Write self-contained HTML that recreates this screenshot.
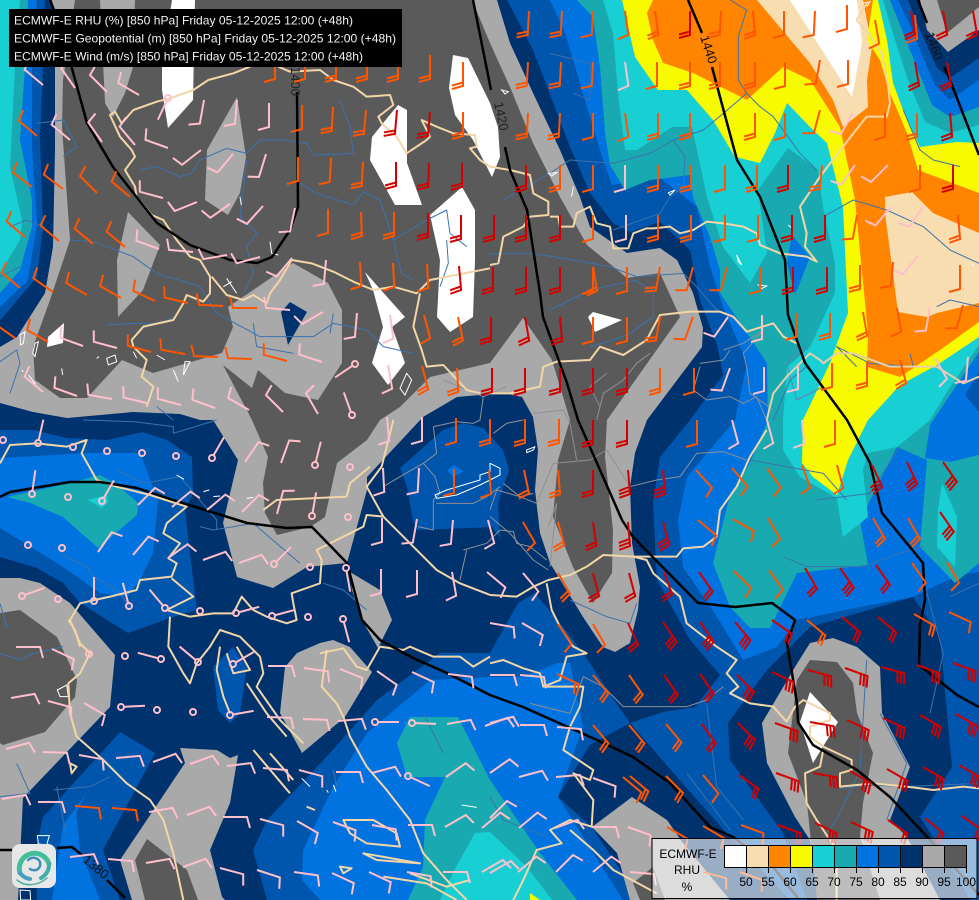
<!DOCTYPE html>
<html><head><meta charset="utf-8"><title>ECMWF-E</title>
<style>html,body{margin:0;padding:0;background:#00326e;width:979px;height:900px;overflow:hidden}svg{display:block}text{font-family:"Liberation Sans",sans-serif}</style></head>
<body>
<svg xmlns="http://www.w3.org/2000/svg" width="979" height="900" viewBox="0 0 979 900">
<defs>
<path id="a" fill="none" d="M0 0V24L-11 27"/>
<path id="b" fill="none" d="M0 0V24L-11 27M0 20.500L-11 23.500"/>
<path id="d" fill="none" d="M0 0V24L-11 27M0 20.500L-11 23.500M0 17L-11 20"/>
<g id="c" fill="none"><circle r="3"/><path d="M0 3V24"/></g>
<circle id="o" r="3" fill="none"/>
</defs>
<rect width="979" height="900" fill="#00326e"/>

<!-- west bands -->
<polygon fill="#0055ad" points="0,0 45,0 43,67 40,137 43,227 37,277 3,317 0,320"/>
<polygon fill="#0073e0" points="0,0 37,0 32,67 32,147 37,223 28,280 0,307"/>
<polygon fill="#18aab0" points="0,0 28,0 25,67 20,140 32,200 32,227 20,270 0,293"/>
<polygon fill="#18d0d4" points="0,0 20,0 15,67 10,167 22,220 20,240 0,273"/>

<!-- SW blues -->
<polygon fill="#0055ad" points="0,430 33,430 67,438 107,440 143,432 167,440 192,457 193,493 185,510 190,553 197,610 173,617 128,633 80,603 63,583 37,568 0,557"/>
<polygon fill="#0073e0" points="0,458 87,453 140,453 158,500 153,553 140,580 127,597 100,593 60,565 0,528"/>
<polygon fill="#18aab0" points="7,497 70,483 100,475 115,483 138,503 137,515 98,548 63,517 30,503"/>
<polygon fill="#18d0d4" points="88,500 107,495 108,502 102,508"/>
<polygon fill="#0055ad" points="120,732 155,753 103,850 120,900 37,900 35,853 43,817"/>
<polygon fill="#0073e0" points="87,793 63,825 52,900 100,900 80,850 76,812"/>
<polygon fill="#0055ad" points="213,667 233,647 247,667 240,713 230,723 218,710"/>

<!-- east big fields -->
<polygon fill="#0055ad" points="507,0 533,50 570,147 590,193 613,223 630,232 660,222 690,250 700,300 717,345 723,375 690,420 660,457 653,503 657,580 690,640 720,675 695,707 663,712 630,723 690,800 735,850 770,900 979,900 979,0"/>
<polygon fill="#0073e0" points="550,0 565,33 587,107 603,160 612,185 660,178 697,207 710,267 723,307 747,363 735,420 687,477 678,520 683,567 717,617 743,660 777,647 797,620 860,607 913,597 933,587 960,575 979,572 979,0"/>
<polygon fill="#18aab0" points="577,0 593,17 600,67 605,133 610,165 625,190 650,180 690,175 693,197 710,237 720,270 720,293 743,327 767,363 768,420 750,463 730,495 713,563 730,607 750,628 770,628 797,573 868,565 860,520 897,447 927,460 920,547 955,583 979,563 979,0"/>
<polygon fill="#18d0d4" points="603,0 613,33 618,93 625,150 637,150 672,127 692,127 707,197 723,247 750,283 767,253 758,190 788,148 818,170 823,207 835,263 835,293 810,347 787,367 783,420 783,450 800,477 837,498 843,537 868,517 863,470 868,453 897,447 930,420 945,395 979,345 979,0"/>
<polygon fill="#0073e0" points="979,352 950,395 930,425 925,458 950,462 979,455"/>
<polygon fill="#0055ad" points="979,372 965,395 979,412"/>
<polygon fill="#18d0d4" points="942,483 957,517 955,567 937,547 938,510"/>
<polygon fill="#0073e0" points="792,235 810,257 795,295 787,263"/>
<polygon fill="#f8fb00" points="622,0 635,57 658,90 687,90 713,120 735,157 760,163 775,133 787,103 810,127 827,143 843,207 848,313 830,363 803,420 802,463 813,477 837,495 848,460 868,420 900,385 937,365 979,337 979,0"/>
<polygon fill="#ff8500" points="647,13 653,0 873,0 867,40 880,60 890,93 907,133 918,170 979,193 979,322 940,350 900,377 867,367 868,333 855,200 840,127 810,80 783,67 747,100 693,73 663,63 653,40"/>
<polygon fill="#f8ddb0" points="757,0 810,63 833,100 843,127 868,107 867,80 872,47 863,0"/>
<polygon fill="#ffffff" points="790,0 852,97 862,43 857,0"/>
<polygon fill="#f8ddb0" points="885,197 912,192 933,213 979,233 979,303 937,313 927,317 898,312 885,213"/>
<polygon fill="#f8fb00" points="873,0 878,0 887,40 893,83 903,110 920,147 957,142 979,143 979,180 918,170 907,133 890,93 880,60 867,40"/>
<polygon fill="#18d0d4" points="878,0 979,0 979,143 957,142 920,147 903,110 893,83 887,40"/>
<polygon fill="#18aab0" points="883,0 979,0 979,125 950,133 925,122 908,80 895,40"/>
<polygon fill="#0073e0" points="890,0 979,0 979,107 950,117 932,105 916,65 902,30"/>
<polygon fill="#0055ad" points="898,0 979,0 979,80 950,100 935,85 922,55 910,25"/>
<polygon fill="#00326e" points="908,0 979,0 979,58 950,78 937,68 920,30"/>
<polygon fill="#a9a9a9" points="920,0 979,0 979,30 948,52 927,30"/>
<polygon fill="#5a5a5a" points="937,0 979,0 979,7 947,33"/>

<!-- south center -->
<polygon fill="#0055ad" points="490,653 518,603 535,593 563,627 583,653 623,713 630,723 590,745 558,797 592,827 640,900 267,900 253,850 267,820 330,753 377,700 440,653"/>
<polygon fill="#0073e0" points="490,677 430,680 367,733 333,787 303,850 302,880 320,900 623,900 558,797 583,727 570,663 557,663 523,677"/>
<polygon fill="#18aab0" points="397,743 410,717 458,717 490,780 540,853 577,900 408,900 423,867 425,820 445,777 407,777"/>
<polygon fill="#18d0d4" points="475,833 490,832 527,867 552,900 440,900 457,865"/>
<polygon fill="#f8fb00" points="530,893 540,900 530,900"/>
<polygon fill="#00326e" points="630,723 590,745 558,797 592,827 640,900 790,900 730,837 677,777"/>

<!-- SE navy + blob -->
<polygon fill="#00326e" points="728,723 767,670 810,627 913,597 940,637 952,767 920,817 943,853 970,900 807,900 783,833 730,760"/>
<polygon fill="#a9a9a9" points="833,638 857,647 880,667 882,713 910,767 890,820 907,837 940,900 823,900 810,840 795,817 767,763 762,723 795,667 810,643"/>
<polygon fill="#5a5a5a" points="810,660 837,662 853,683 857,713 873,753 863,803 860,837 880,900 817,900 807,803 788,753 797,680"/>
<polygon fill="#ffffff" points="810,692 838,722 813,763 800,722"/>

<!-- central & north grays -->
<polygon fill="#a9a9a9" points="52,0 497,0 510,43 533,93 560,150 580,197 590,227 627,253 660,248 677,260 693,293 703,328 702,347 647,420 635,453 630,487 632,543 640,587 638,610 630,643 615,652 603,647 583,617 550,563 540,533 535,490 538,450 533,417 522,397 503,393 457,397 423,417 367,477 367,490 347,563 307,567 273,588 237,577 223,523 238,460 213,420 200,420 180,414 133,412 67,418 33,412 0,403 0,347 17,337 45,293 53,247 55,150 55,67"/>
<polygon fill="#5a5a5a" points="75,0 472,0 490,43 510,87 533,143 560,197 587,245 627,278 660,273 680,317 607,420 605,457 613,530 612,573 593,603 573,567 553,517 558,460 570,420 552,360 523,318 490,363 430,377 400,407 380,420 367,440 337,463 325,517 310,527 277,535 265,513 263,483 268,457 252,420 223,365 252,388 258,370 285,393 318,400 342,363 342,310 328,283 293,263 228,307 233,327 222,353 153,373 122,360 87,398 60,398 35,380 33,347 50,300 70,240 62,127 63,80"/>
<polygon fill="#a9a9a9" points="100,0 135,0 133,67 125,93 113,117 105,103"/>
<polygon fill="#a9a9a9" points="237,97 246,157 240,193 228,215 205,200 207,150"/>
<polygon fill="#a9a9a9" points="128,212 160,245 143,290 118,317 117,260"/>
<polygon fill="#ffffff" points="172,0 195,0 193,100 168,128 162,90 162,60"/>
<polygon fill="#ffffff" points="398,105 407,110 407,163 422,205 395,205 370,160 372,137 388,117"/>
<polygon fill="#ffffff" points="453,55 468,58 490,103 498,127 500,157 492,177 473,140 455,115 449,88"/>
<polygon fill="#ffffff" points="462,187 475,210 475,260 473,317 450,332 437,317 440,260 430,215"/>
<polygon fill="#ffffff" points="365,272 405,317 392,327 405,363 388,385 372,363 383,327 373,290"/>
<polygon fill="#ffffff" points="64,323 63,343 47,347 48,337"/>
<polygon fill="#ffffff" points="588,317 593,312 622,320 595,332"/>
<polygon fill="#00326e" points="290,302 307,312 288,345 281,312"/>

<!-- central basin -->
<polygon fill="#0055ad" points="400,468 443,430 463,423 483,428 503,450 509,470 498,503 500,538 492,527 417,530 413,520 407,487"/>
<polygon fill="#0073e0" points="447,470 454,465 464,471 453,477"/>

<!-- other grays -->
<polygon fill="#a9a9a9" points="0,578 20,578 40,583 70,603 115,655 110,707 43,777 23,798 18,900 0,900"/>
<polygon fill="#5a5a5a" points="0,613 20,610 57,637 77,680 75,697 45,732 3,745 0,743"/>
<polygon fill="#a9a9a9" points="180,748 217,750 230,758 238,755 230,803 210,850 222,897 225,900 132,900 120,860 185,763"/>
<polygon fill="#5a5a5a" points="147,839 187,870 198,900 145,900 135,860"/>
<polygon fill="#a9a9a9" points="333,640 350,647 372,672 345,717 302,753 280,713 285,667 297,653 320,643"/>
<polygon fill="#a9a9a9" points="350,572 380,590 392,620 378,648 362,620 352,590"/>
<polygon fill="#a9a9a9" points="632,797 667,820 683,843 730,900 630,900 617,853 592,827"/>
<polygon fill="#5a5a5a" points="653,867 633,883 640,900 665,900"/>

<!-- rivers -->
<g fill="none" stroke="#3d72ad" stroke-width="3" stroke-linejoin="round" transform="translate(0,60) scale(.33333)">
<path d="M420 330L470 320 540 350 575 340 600 300 680 265 740 280 780 240 850 240 920 250 940 285 1060 280 1050 200 1020 120"/>
<path d="M900 370L950 400 1060 435 1090 395 1140 420 1180 540 1205 640 1240 660"/>
<path d="M210 540L280 545 400 590 470 640 600 680 650 760 780 830 940 830 1000 790 1100 810 1150 860 1240 880"/>
<path d="M320 795L400 790 480 790 520 770M730 700L760 640 740 560 770 520 720 470 740 300M0 650L60 620M30 500L80 480 130 500M110 190L190 180 230 260 190 290"/>
<path d="M1180 540L1280 480 1340 450 1350 520 1400 560M1320 680L1345 610 1340 540M0 905L50 870 60 910 30 1000M470 1040L520 1080"/>
<path d="M760 790L770 860 880 880M990 820L1000 760"/>
</g>
<g fill="none" stroke="#3d72ad" stroke-width="3" stroke-linejoin="round" transform="translate(490,0) scale(.33333)">
<path d="M720 0L770 30 745 110 745 240 770 280 810 320 850 350 930 460 980 510M770 280L700 340 640 390 550 420 480 460 370 490 240 480 180 520 40 600M550 420L585 470 580 560 540 590 510 640 370 690M1000 650L1090 600 1190 630 1300 680 1380 750 1467 790"/>
<path d="M0 760L120 760 190 770 360 800 440 830 580 820 620 860 680 930 740 960M180 930L240 900 300 870 440 840M430 840L490 870 490 950 420 1000 370 1020 300 1040M1340 920L1380 900 1467 920M1240 330L1290 450 1330 480 1410 500M180 160L300 190 300 300 250 280"/>
<path d="M1100 1100L1040 1040 1140 1090 1270 1100 1260 1060M850 1260L900 1140 950 1100"/>
</g>
<g fill="none" stroke="#3d72ad" stroke-width="3" stroke-linejoin="round" transform="translate(0,420) scale(.33333)">
<path d="M250 0L400 5 520 20 520 40 650 0M350 150L430 190 540 170 650 300 650 330M180 400L260 440 280 470 350 510 390 560M0 700L60 720 100 700 190 680M0 550L20 620M50 1030L90 1120 0 1130M160 1110L270 1100 330 1070M170 1100L200 1250M600 320L640 330 760 310 900 430M970 490L1030 510 1100 570M1000 1050L1010 1100M1270 880L1330 1000"/>
</g>
<g fill="none" stroke="#3d72ad" stroke-width="3" stroke-linejoin="round" transform="translate(490,420) scale(.33333)">
<path d="M240 540L350 590 420 610 440 550M650 850L680 1100 760 1200M1000 1250L1040 1200 1110 1050 1130 720M1170 880L1250 1030 1190 1200M1320 880L1360 700 1300 480M1380 530L1467 490M0 1130L40 1200 170 1250M590 1060L660 1150 720 1230"/>
<path d="M1050 1105L1150 1095 1240 1100 1467 1090M880 410L950 440 1120 440 1230 400 1300 380M780 120L1000 160 1070 240M980 240L1140 220 1230 80" />
</g>
<!-- thin grey borders -->
<g fill="none" stroke="#8d9097" stroke-width="3" stroke-linejoin="round" transform="translate(300,380) scale(.33333)">
<path d="M370 250L405 290 420 340 400 360 400 450 355 440M400 140L470 125 520 130 540 120 550 50M580 160L620 130 670 120M610 310L660 350 700 340M600 320L560 350 520 370 410 370M490 510L560 490 600 450 640 455 650 490 690 500 740 540M480 600L500 510M250 320L300 290 370 250 410 220 400 140M430 0L550 50 620 20M700 100L790 90 810 130 830 240"/>
</g>
<g fill="none" stroke="#8d9097" stroke-width="3" stroke-linejoin="round" transform="translate(490,420) scale(.33333)">
<path d="M0 270L20 210 90 230 140 250 190 130 300 120 350 90 420 200 500 180 570 170 620 100 700 95 770 120M175 450L130 420 60 340 0 290M120 850L240 880 280 770 340 800 400 860 480 860 590 860 650 840 700 800M175 320L200 250 180 440" />
</g>
<g fill="none" stroke="#8d9097" stroke-width="3" stroke-linejoin="round" transform="translate(490,0) scale(.33333)">
<path d="M700 1050L760 1030 820 990 760 1060 770 1100 780 1180 850 1230M630 1090L700 1080 720 1050M480 1060L440 1090 400 1140 340 1180 320 1260M350 1120L300 1160 330 1220M630 1100L610 1170 650 1200 720 1190 760 1210 800 1190 830 1260"/>
<path d="M950 1040L890 1090 920 1200 1000 1160" stroke="#5b83b5"/>
</g>
<!-- white lake outlines -->
<g fill="none" stroke="#fff" stroke-width="3" stroke-linejoin="round" transform="translate(300,380) scale(.33333)">
<path d="M405 345L440 330 540 300 540 285 570 275 570 250 600 265 600 285 540 315 470 345 410 355Z"/>
<path d="M680 210L705 200 700 210 680 218Z"/>
</g>
<g fill="none" stroke="#fff" stroke-width="3" transform="translate(0,60) scale(.33333)">
<path d="M60 825L75 815 70 850 62 855ZM105 850L115 845 105 890 98 880ZM320 895L345 885 350 905 325 915ZM290 895L297 890M555 905L570 905 550 945ZM520 930L535 965M680 655L710 700M670 680L695 665M1220 940L1235 960 1215 1005 1200 985ZM400 875L410 895M470 885L495 900M810 545L815 580 835 585M185 925L188 945M65 930L70 935M85 945L105 970 90 965M720 410L724 435"/>
</g>
<g fill="none" stroke="#fff" stroke-width="3" transform="translate(0,420) scale(.33333)">
<path d="M172 810L200 795 205 830 180 830ZM60 1410L90 1412 92 1440 62 1440ZM112 1247L148 1247 140 1275 115 1272ZM530 165L552 178M610 215L628 210M640 230L660 228M740 235L760 232M905 1075L930 1100M980 1110L985 1118M1000 1095L1008 1115M1385 1155L1430 1162"/>
</g>
<g fill="none" stroke="#fff" stroke-width="3" transform="translate(490,0) scale(.33333)">
<path d="M35 270L55 275 45 282ZM175 520L200 518 185 528ZM250 560L245 590M535 578L555 570 540 585ZM740 765L755 795 745 785ZM805 855L830 858 815 866ZM895 675L905 685M1115 10L1140 5 1130 20M1445 790L1450 800"/>
</g>

<!-- wheat borders -->
<g fill="none" stroke="#f3d6a7" stroke-width="6" stroke-linejoin="round" transform="scale(.33333)">
<g transform="translate(0,180)">
<path d="M750 20L700 40 625 60 580 90 510 115 470 125 400 150 365 190 345 155 330 165 360 230 395 270 405 290 375 330 405 380 410 410 455 465 490 480 530 540 570 590 600 600 630 650 630 700 610 725 560 705 550 730 520 780 430 800 395 840 400 860 440 900 425 950 460 980 440 1040"/>
<path d="M835 20L870 35 960 30 1000 60 1060 80 1100 110 1170 105 1180 135 1135 170 1145 190 1190 230 1220 280 1280 240 1290 230 1265 180 1310 200 1360 220 1425 225 1430 260 1410 265 1440 300 1470 320 1530 330 1590 345 1600 400 1645 425 1645 465 1590 470 1570 500 1510 530 1495 610 1470 615"/>
<path d="M875 600L935 610 1000 635 1060 665 1120 690 1180 680 1250 700 1290 660 1470 625M875 600L840 660 810 700 800 730 760 705 730 720 680 705 635 650M1260 700L1240 800 1265 870 1280 920 1330 915 1400 990 1440 1000"/>
</g>
<g transform="translate(1470,0)">
<path d="M180 650L205 650 210 680 250 680 260 640 300 620 320 670 360 680 370 745 415 745 430 700 470 685 490 685 540 680 570 700 610 690 650 665 700 670 760 680 800 700 810 735 870 760 950 770 980 785 945 740 950 700 930 620 950 590 990 530 1090 400 1130 350 1190 350 1200 310 1195 260 1175 160 1135 100 1100 60 1130 10"/>
<path d="M0 1180L60 1180 150 1160 160 1100 200 1085 300 1080 330 1040 400 1065 470 1020 510 945 600 935 690 935 730 950 770 995 850 970 880 1010 920 1030"/>
<path d="M830 1260L850 1180 890 1130 960 1060 990 1080 1000 1090 1040 1060 1090 1060 1200 1100 1340 1100 1420 1150 1467 1130" stroke="#e8cfa8"/>
</g>
<g transform="translate(1470,1260)">
<path d="M830 30L780 110 740 200 690 270 680 350 640 380 580 385 560 410 430 410 340 405 290 440 240 465 175 480 130 500 80 530 0 525"/>
<path d="M430 410L470 420 490 460 570 530 590 610 680 680 740 720 710 760 745 800 720 820 780 850 850 860 890 905 915 860 940 840 1020 880 1020 900 960 920 960 950 1000 980 1085 1020 1085 1050 1050 1060 1050 1100 1150 1090 1250 1100 1330 1110 1420 1100 1467 1105"/>
<path d="M1000 990L990 1040 945 1060 950 1150 980 1200 1040 1290 1040 1440"/>
<path d="M170 490L185 570 210 620 250 680 290 700 230 710 210 780 160 800 210 800 280 800 270 860 240 920 220 990 310 1050 300 1080 250 1060 310 1140 305 1220 240 1200 180 1230 215 1270 140 1290 100 1380 70 1440"/>
<path d="M240 1230L310 1290 370 1350 500 1420M0 730L40 720 100 745 150 760 160 800"/>
</g>
<g transform="translate(0,1260)">
<path d="M0 130L30 75 110 70 200 80 260 60 245 100 290 180 350 200 450 225 560 260 500 310 490 340 540 370 505 415 530 430 515 470 420 480 410 510 330 530 240 550 210 600 240 670 270 700 240 760 205 790 210 880 230 950 310 1020 380 1090 450 1140 490 1200 520 1300 550 1440"/>
<path d="M515 475L580 530 500 570 570 590 640 580 700 580 725 530 760 570 800 590 860 610 890 600 880 550 875 520 960 490 965 420 950 390 1050 340 1090 320 1100 285 1150 290 1100 200 1145 140 1180 0M1040 230L1050 190 1110 140M790 270L830 240 1040 230"/>
<path d="M510 590L505 680 550 760 570 790 590 730 630 680 660 630 720 650 780 710 790 760 770 800 840 900 910 970"/>
<path d="M660 680L650 750 670 830 690 880M680 700L700 760 750 750 710 680M740 790L800 880 860 950M760 990L870 1120M810 1000L880 1080"/>
<path d="M1150 290L1230 370 1310 450 1380 490 1470 525"/>
<path d="M960 700L1030 685 1070 740 1100 750 1140 680 1210 690 1230 680 1300 710 1380 710 1420 740 1470 710M980 690L965 800 1010 850 1030 890 1050 950 1100 1040 1160 1110 1230 1200 1270 1300 1340 1380 1400 1440"/>
<path d="M1030 1200L1120 1200 1190 1240 1200 1280 1100 1270 1050 1240ZM1090 1300L1260 1330 1130 1320ZM1150 1370L1280 1390 1370 1440M1230 1360L1340 1400 1410 1380M1020 1340L1055 1345 1030 1360Z"/>
<path d="M205 600L225 630 240 680M920 1160L945 1170M210 1030L230 1040 215 1060Z"/>
</g>
</g>

<!-- black geopotential -->
<g fill="none" stroke="#000" stroke-width="2.500" stroke-linejoin="round">
<path d="M50 0L60 25 87 123 113 167 157 223 190 245 230 260 257 263 272 257 290 230 298 207 297 92"/>
<path d="M473 0L485 60 491 90M505 147L510 170 527 210 540 293 543 317 567 383 578 420 622 520 633 537 698 603 735 607 772 603 795 620 787 643 797 703 798 722 813 745 857 770 890 797 930 840 979 895"/>
<path d="M688 0L702 33M712 67L720 97 737 160 760 197 785 260 788 315 805 363 847 420 870 463 882 513 923 563 925 600 920 625 919 665 957 695 979 707"/>
<path d="M918 0L927 23M944 67L948 75 979 155"/>
<path d="M0 497L10 492 70 482 100 482 137 488 173 500 247 523 287 528 312 527 347 563 362 620 380 640 413 658 447 673 490 695 523 707 597 740 633 757 670 783 710 827 733 837 773 867 798 898"/>
<path d="M0 850L12 850M57 848L72 847 82 855M107 880L125 898"/>
</g>
<g fill="#111" font-size="13">
<text transform="translate(700 37) rotate(72)">1440</text>
<text transform="translate(925 34) rotate(70)">1460</text>
<text transform="translate(494 103) rotate(78)" fill="#222">1420</text>
<text transform="translate(82 861) rotate(40)">1380</text>
<text transform="translate(291 67) rotate(90)" fill="#222">1400</text>
</g>

<!-- barbs: pink single -->
<g stroke="#ffbfcb" stroke-width="2" fill="none">
<use href="#a" transform="translate(43 85)rotate(130)"/><use href="#a" transform="translate(75 88)rotate(145)"/><use href="#a" transform="translate(107 92)rotate(135)"/><use href="#a" transform="translate(139 95)rotate(120)"/>
<use href="#a" transform="translate(70 140)rotate(130)"/><use href="#a" transform="translate(102 142)rotate(145)"/><use href="#a" transform="translate(135 145)rotate(140)"/><use href="#a" transform="translate(168 148)rotate(110)"/><use href="#a" transform="translate(201 150)rotate(52)"/><use href="#a" transform="translate(233 154)rotate(40)"/><use href="#a" transform="translate(266 154)rotate(17)"/>
<use href="#a" transform="translate(204 100)rotate(10)"/><use href="#a" transform="translate(237 100)rotate(5)"/><use href="#a" transform="translate(269 103)rotate(0)"/>
<use href="#a" transform="translate(197 202)rotate(68)"/><use href="#a" transform="translate(230 204)rotate(55)"/><use href="#a" transform="translate(263 206)rotate(42)"/><use href="#a" transform="translate(295 208)rotate(12)"/><use href="#a" transform="translate(163 198)rotate(105)"/><use href="#a" transform="translate(159 249)rotate(110)"/><use href="#a" transform="translate(193 252)rotate(95)"/><use href="#a" transform="translate(227 255)rotate(80)"/><use href="#a" transform="translate(260 257)rotate(75)"/><use href="#a" transform="translate(292 258)rotate(40)"/><use href="#a" transform="translate(326 260)rotate(5)"/>
<use href="#a" transform="translate(83 346)rotate(110)"/><use href="#a" transform="translate(117 348)rotate(105)"/><use href="#a" transform="translate(323 312)rotate(60)"/><use href="#a" transform="translate(290 310)rotate(95)"/><use href="#a" transform="translate(322 362)rotate(108)"/><use href="#a" transform="translate(357 313)rotate(5)"/>
<use href="#a" transform="translate(43 392)rotate(130)"/><use href="#a" transform="translate(77 396)rotate(110)"/><use href="#a" transform="translate(112 399)rotate(100)"/><use href="#a" transform="translate(147 403)rotate(103)"/><use href="#a" transform="translate(181 405)rotate(105)"/><use href="#a" transform="translate(215 408)rotate(110)"/><use href="#a" transform="translate(249 410)rotate(120)"/><use href="#a" transform="translate(283 412)rotate(135)"/><use href="#a" transform="translate(318 414)rotate(150)"/>
<use href="#a" transform="translate(390 315)rotate(-8)"/><use href="#a" transform="translate(388 365)rotate(-10)"/>
<use href="#a" transform="translate(625 62)rotate(-8)"/><use href="#a" transform="translate(853 113)rotate(30)"/><use href="#a" transform="translate(855 165)rotate(35)"/><use href="#a" transform="translate(888 165)rotate(45)"/><use href="#a" transform="translate(625 165)rotate(0)"/>
<use href="#a" transform="translate(626 215)rotate(0)"/><use href="#a" transform="translate(891 207)rotate(40)"/><use href="#a" transform="translate(923 207)rotate(35)"/><use href="#a" transform="translate(918 256)rotate(40)"/>
<use href="#a" transform="translate(728 317)rotate(35)"/><use href="#a" transform="translate(762 315)rotate(0)"/><use href="#a" transform="translate(930 307)rotate(10)"/>
<use href="#a" transform="translate(730 368)rotate(20)"/><use href="#a" transform="translate(764 367)rotate(0)"/><use href="#a" transform="translate(798 365)rotate(0)"/><use href="#a" transform="translate(935 358)rotate(-30)"/><use href="#a" transform="translate(968 357)rotate(5)"/>
<use href="#a" transform="translate(422 417)rotate(0)"/><use href="#a" transform="translate(387 417)rotate(-5)"/><use href="#a" transform="translate(419 468)rotate(3)"/><use href="#a" transform="translate(383 468)rotate(-3)"/><use href="#a" transform="translate(382 518)rotate(0)"/><use href="#a" transform="translate(417 519)rotate(10)"/><use href="#a" transform="translate(453 520)rotate(5)"/><use href="#a" transform="translate(488 520)rotate(-15)"/><use href="#a" transform="translate(381 569)rotate(0)"/><use href="#a" transform="translate(417 570)rotate(0)"/><use href="#a" transform="translate(452 572)rotate(-10)"/><use href="#a" transform="translate(487 572)rotate(-50)"/><use href="#a" transform="translate(523 573)rotate(-40)"/>
<use href="#a" transform="translate(732 420)rotate(-15)"/><use href="#a" transform="translate(767 420)rotate(-15)"/><use href="#a" transform="translate(802 420)rotate(-5)"/>
<use href="#a" transform="translate(490 623)rotate(-80)"/><use href="#a" transform="translate(522 623)rotate(-60)"/><use href="#a" transform="translate(490 675)rotate(-90)"/><use href="#a" transform="translate(520 675)rotate(-85)"/><use href="#a" transform="translate(490 723)rotate(-105)"/><use href="#a" transform="translate(520 725)rotate(-90)"/><use href="#a" transform="translate(557 727)rotate(-85)"/>
<use href="#a" transform="translate(490 773)rotate(-125)"/><use href="#a" transform="translate(519 777)rotate(-105)"/><use href="#a" transform="translate(556 777)rotate(-95)"/><use href="#a" transform="translate(593 778)rotate(-70)"/>
<use href="#a" transform="translate(490 818)rotate(-135)"/><use href="#a" transform="translate(519 828)rotate(-130)"/><use href="#a" transform="translate(555 828)rotate(-110)"/><use href="#a" transform="translate(592 827)rotate(-90)"/><use href="#a" transform="translate(628 827)rotate(-70)"/>
<use href="#a" transform="translate(490 873)rotate(-120)"/><use href="#a" transform="translate(518 872)rotate(-130)"/><use href="#a" transform="translate(556 872)rotate(-135)"/><use href="#a" transform="translate(593 872)rotate(-130)"/><use href="#a" transform="translate(630 872)rotate(-85)"/>
<use href="#a" transform="translate(245 462)rotate(-146)"/><use href="#a" transform="translate(281 463)rotate(-160)"/>
<use href="#a" transform="translate(138 505)rotate(-135)"/><use href="#a" transform="translate(172 507)rotate(-130)"/><use href="#a" transform="translate(207 510)rotate(-130)"/><use href="#a" transform="translate(242 512)rotate(-135)"/><use href="#a" transform="translate(277 514)rotate(-165)"/>
<use href="#a" transform="translate(98 552)rotate(-145)"/><use href="#a" transform="translate(133 555)rotate(-140)"/><use href="#a" transform="translate(168 558)rotate(-125)"/><use href="#a" transform="translate(203 560)rotate(-110)"/><use href="#a" transform="translate(239 563)rotate(-110)"/>
<use href="#a" transform="translate(16 647)rotate(-90)"/><use href="#a" transform="translate(52 649)rotate(-65)"/><use href="#a" transform="translate(268 666)rotate(-90)"/><use href="#a" transform="translate(304 668)rotate(-82)"/><use href="#a" transform="translate(340 669)rotate(-68)"/><use href="#a" transform="translate(377 671)rotate(-55)"/><use href="#a" transform="translate(412 672)rotate(-65)"/><use href="#a" transform="translate(448 674)rotate(-83)"/>
<use href="#a" transform="translate(11 698)rotate(-100)"/><use href="#a" transform="translate(48 701)rotate(-75)"/><use href="#a" transform="translate(84 703)rotate(-60)"/><use href="#a" transform="translate(267 717)rotate(-88)"/><use href="#a" transform="translate(303 719)rotate(-88)"/><use href="#a" transform="translate(338 721)rotate(-95)"/><use href="#a" transform="translate(447 724)rotate(-100)"/><use href="#a" transform="translate(485 726)rotate(-110)"/>
<use href="#a" transform="translate(6 749)rotate(-105)"/><use href="#a" transform="translate(43 752)rotate(-88)"/><use href="#a" transform="translate(79 755)rotate(-80)"/><use href="#a" transform="translate(116 758)rotate(-95)"/><use href="#a" transform="translate(153 762)rotate(-110)"/><use href="#a" transform="translate(190 764)rotate(-110)"/><use href="#a" transform="translate(227 766)rotate(-97)"/><use href="#a" transform="translate(263 768)rotate(-85)"/><use href="#a" transform="translate(299 770)rotate(-75)"/><use href="#a" transform="translate(336 772)rotate(-90)"/><use href="#a" transform="translate(372 773)rotate(-105)"/><use href="#a" transform="translate(446 777)rotate(-125)"/>
<use href="#a" transform="translate(2 799)rotate(-100)"/><use href="#a" transform="translate(38 802)rotate(-90)"/><use href="#a" transform="translate(149 812)rotate(-100)"/><use href="#a" transform="translate(187 815)rotate(-110)"/><use href="#a" transform="translate(223 817)rotate(-90)"/><use href="#a" transform="translate(260 819)rotate(-75)"/><use href="#a" transform="translate(297 821)rotate(-60)"/><use href="#a" transform="translate(333 822)rotate(-70)"/><use href="#a" transform="translate(372 825)rotate(-80)"/><use href="#a" transform="translate(408 825)rotate(-90)"/><use href="#a" transform="translate(445 827)rotate(-120)"/><use href="#a" transform="translate(482 828)rotate(-130)"/>
<use href="#a" transform="translate(70 857)rotate(-97)"/><use href="#a" transform="translate(108 859)rotate(-85)"/><use href="#a" transform="translate(146 863)rotate(-100)"/><use href="#a" transform="translate(183 867)rotate(-110)"/><use href="#a" transform="translate(220 868)rotate(-75)"/><use href="#a" transform="translate(257 870)rotate(-72)"/><use href="#a" transform="translate(294 872)rotate(-82)"/><use href="#a" transform="translate(332 873)rotate(-65)"/><use href="#a" transform="translate(369 872)rotate(-65)"/><use href="#a" transform="translate(407 872)rotate(-80)"/><use href="#a" transform="translate(443 872)rotate(-90)"/><use href="#a" transform="translate(482 872)rotate(-120)"/>
<!-- calm -->
<use href="#c" transform="translate(168 98)rotate(25)" /><use href="#c" transform="translate(352 415)rotate(160)"/><use href="#c" transform="translate(355 364)rotate(56)"/>
<use href="#c" transform="translate(38 443)rotate(193)"/><use href="#c" transform="translate(212 458)rotate(210)"/><use href="#c" transform="translate(315 465)rotate(194)"/><use href="#c" transform="translate(32 494)rotate(188)"/><use href="#c" transform="translate(102 501)rotate(210)"/><use href="#c" transform="translate(312 516)rotate(190)"/><use href="#c" transform="translate(274 564)rotate(225)"/><use href="#c" transform="translate(346 568)rotate(-10)"/>
<use href="#c" transform="translate(22 596)rotate(250)"/><use href="#c" transform="translate(94 601)rotate(180)"/><use href="#c" transform="translate(129 606)rotate(165)"/><use href="#c" transform="translate(165 608)rotate(140)"/><use href="#c" transform="translate(236 613)rotate(255)"/><use href="#c" transform="translate(272 616)rotate(255)"/><use href="#c" transform="translate(343 619)rotate(-15)"/>
<use href="#c" transform="translate(161 659)rotate(105)"/><use href="#c" transform="translate(198 662)rotate(130)"/><use href="#c" transform="translate(233 664)rotate(240)"/><use href="#c" transform="translate(121 707)rotate(-93)"/><use href="#c" transform="translate(230 715)rotate(-100)"/><use href="#c" transform="translate(375 722)rotate(-90)"/><use href="#c" transform="translate(412 723)rotate(-88)"/><use href="#c" transform="translate(408 776)rotate(-65)"/>
<use href="#o" x="3" y="440"/><use href="#o" x="73" y="447"/><use href="#o" x="107" y="451"/><use href="#o" x="142" y="453"/><use href="#o" x="176" y="456"/><use href="#o" x="350" y="467"/><use href="#o" x="68" y="497"/><use href="#o" x="348" y="517"/><use href="#o" x="28" y="545"/><use href="#o" x="62" y="548"/><use href="#o" x="310" y="567"/><use href="#o" x="58" y="599"/><use href="#o" x="200" y="611"/><use href="#o" x="308" y="617"/><use href="#o" x="89" y="654"/><use href="#o" x="125" y="656"/><use href="#o" x="157" y="710"/><use href="#o" x="193" y="712"/>
</g>
<!-- orange single -->
<g stroke="#ff5500" stroke-width="2" fill="none">
<use href="#a" transform="translate(37 136)rotate(130)"/><use href="#a" transform="translate(63 189)rotate(127)"/><use href="#a" transform="translate(32 187)rotate(127)"/><use href="#a" transform="translate(97 193)rotate(135)"/><use href="#a" transform="translate(130 197)rotate(130)"/><use href="#a" transform="translate(25 237)rotate(130)"/><use href="#a" transform="translate(59 241)rotate(130)"/><use href="#a" transform="translate(93 244)rotate(130)"/><use href="#a" transform="translate(125 247)rotate(130)"/><use href="#a" transform="translate(20 288)rotate(130)"/><use href="#a" transform="translate(53 292)rotate(125)"/><use href="#a" transform="translate(87 295)rotate(120)"/><use href="#a" transform="translate(121 298)rotate(120)"/><use href="#a" transform="translate(155 301)rotate(115)"/><use href="#a" transform="translate(188 303)rotate(103)"/><use href="#a" transform="translate(223 306)rotate(93)"/><use href="#a" transform="translate(257 308)rotate(90)"/><use href="#a" transform="translate(15 338)rotate(125)"/><use href="#a" transform="translate(48 342)rotate(120)"/><use href="#a" transform="translate(151 352)rotate(105)"/><use href="#a" transform="translate(185 354)rotate(100)"/><use href="#a" transform="translate(218 357)rotate(92)"/><use href="#a" transform="translate(252 359)rotate(92)"/><use href="#a" transform="translate(287 361)rotate(105)"/>
<use href="#a" transform="translate(302 105)"/><use href="#a" transform="translate(298 157)"/><use href="#a" transform="translate(331 158)rotate(3)"/><use href="#a" transform="translate(328 209)"/><use href="#a" transform="translate(360 262)rotate(-3)"/><use href="#a" transform="translate(393 263)rotate(-3)"/><use href="#a" transform="translate(427 264)rotate(-3)"/><use href="#a" transform="translate(424 315)rotate(-15)"/><use href="#a" transform="translate(275 55)"/><use href="#a" transform="translate(305 55)"/>
<use href="#a" transform="translate(593 11)rotate(3)"/><use href="#a" transform="translate(625 11)rotate(-8)"/><use href="#a" transform="translate(784 11)rotate(0)"/><use href="#a" transform="translate(815 11)rotate(3)"/><use href="#a" transform="translate(847 5)rotate(0)"/><use href="#a" transform="translate(848 60)rotate(0)"/><use href="#a" transform="translate(875 20)rotate(-10)"/>
<use href="#a" transform="translate(593 62)rotate(3)"/><use href="#a" transform="translate(657 62)"/><use href="#a" transform="translate(785 62)"/><use href="#a" transform="translate(820 60)rotate(10)"/>
<use href="#a" transform="translate(593 113)"/><use href="#a" transform="translate(625 113)rotate(-8)"/><use href="#a" transform="translate(785 113)"/><use href="#a" transform="translate(820 110)rotate(15)"/><use href="#a" transform="translate(885 113)"/>
<use href="#a" transform="translate(593 165)"/><use href="#a" transform="translate(725 165)"/><use href="#a" transform="translate(920 165)"/>
<use href="#a" transform="translate(593 215)"/><use href="#a" transform="translate(725 215)"/><use href="#a" transform="translate(758 215)"/><use href="#a" transform="translate(857 215)rotate(10)"/>
<use href="#a" transform="translate(593 267)"/><use href="#a" transform="translate(627 267)"/><use href="#a" transform="translate(693 267)rotate(15)"/><use href="#a" transform="translate(727 267)rotate(15)"/><use href="#a" transform="translate(760 267)"/><use href="#a" transform="translate(893 262)rotate(5)"/><use href="#a" transform="translate(960 265)rotate(0)"/>
<use href="#a" transform="translate(593 317)"/><use href="#a" transform="translate(627 317)"/><use href="#a" transform="translate(693 317)rotate(20)"/><use href="#a" transform="translate(796 313)"/><use href="#a" transform="translate(897 308)rotate(-10)"/><use href="#a" transform="translate(963 305)rotate(15)"/>
<use href="#a" transform="translate(832 363)"/><use href="#a" transform="translate(694 368)"/><use href="#a" transform="translate(456 418)"/><use href="#a" transform="translate(454 469)"/><use href="#a" transform="translate(489 470)rotate(-5)"/>
<use href="#a" transform="translate(697 420)"/><use href="#a" transform="translate(835 420)"/>
<use href="#a" transform="translate(696 470)rotate(-42)"/><use href="#a" transform="translate(732 468)rotate(-40)"/><use href="#a" transform="translate(767 468)rotate(-35)"/><use href="#a" transform="translate(802 465)rotate(-20)"/><use href="#a" transform="translate(837 465)rotate(-15)"/>
<use href="#a" transform="translate(523 522)rotate(-30)"/><use href="#a" transform="translate(698 520)rotate(-50)"/><use href="#a" transform="translate(733 519)rotate(-60)"/><use href="#a" transform="translate(768 518)rotate(-30)"/>
<use href="#a" transform="translate(734 571)rotate(-45)"/><use href="#a" transform="translate(769 570)rotate(-35)"/><use href="#a" transform="translate(912 563)rotate(-35)"/><use href="#a" transform="translate(947 562)rotate(-30)"/>
<use href="#a" transform="translate(558 624)rotate(-35)"/><use href="#a" transform="translate(593 624)rotate(-30)"/><use href="#a" transform="translate(949 612)rotate(-65)"/>
<use href="#a" transform="translate(623 777)rotate(-50)"/><use href="#a" transform="translate(703 775)rotate(-40)"/><use href="#a" transform="translate(667 827)rotate(-60)"/><use href="#a" transform="translate(703 826)rotate(-60)"/><use href="#a" transform="translate(741 825)rotate(-70)"/><use href="#a" transform="translate(703 872)rotate(-75)"/><use href="#a" transform="translate(740 872)rotate(-70)"/>
<use href="#a" transform="translate(75 806)rotate(-85)"/><use href="#a" transform="translate(112 808)rotate(-85)"/>
</g>
<!-- orange double -->
<g stroke="#ff5500" stroke-width="2" fill="none">
<use href="#b" transform="translate(333 107)rotate(3)"/><use href="#b" transform="translate(366 110)rotate(5)"/><use href="#b" transform="translate(363 162)rotate(3)"/><use href="#b" transform="translate(361 212)rotate(-2)"/><use href="#b" transform="translate(394 212)"/><use href="#b" transform="translate(458 317)rotate(-12)"/><use href="#b" transform="translate(422 366)rotate(-15)"/><use href="#b" transform="translate(457 368)rotate(-3)"/><use href="#b" transform="translate(336 55)"/><use href="#b" transform="translate(367 55)"/><use href="#b" transform="translate(398 55)"/><use href="#b" transform="translate(430 55)"/><use href="#b" transform="translate(463 62)"/><use href="#b" transform="translate(463 112)"/>
<use href="#b" transform="translate(529 11)rotate(3)"/><use href="#b" transform="translate(562 11)rotate(3)"/><use href="#b" transform="translate(655 11)rotate(-8)"/><use href="#b" transform="translate(721 11)rotate(3)"/><use href="#b" transform="translate(753 11)rotate(-5)"/><use href="#b" transform="translate(915 15)rotate(-5)"/>
<use href="#b" transform="translate(528 62)rotate(3)"/><use href="#b" transform="translate(561 62)rotate(3)"/><use href="#b" transform="translate(690 62)"/><use href="#b" transform="translate(720 62)"/><use href="#b" transform="translate(755 62)"/>
<use href="#b" transform="translate(528 113)rotate(3)"/><use href="#b" transform="translate(560 113)rotate(3)"/><use href="#b" transform="translate(658 113)"/><use href="#b" transform="translate(690 113)"/><use href="#b" transform="translate(755 113)"/><use href="#b" transform="translate(917 113)"/>
<use href="#b" transform="translate(560 165)"/><use href="#b" transform="translate(658 165)"/><use href="#b" transform="translate(691 165)"/><use href="#b" transform="translate(757 165)"/><use href="#b" transform="translate(822 165)rotate(5)"/>
<use href="#b" transform="translate(658 215)"/><use href="#b" transform="translate(691 215)"/><use href="#b" transform="translate(958 215)rotate(-5)"/>
<use href="#b" transform="translate(593 267)rotate(-10)"/><use href="#b" transform="translate(660 267)rotate(10)"/><use href="#b" transform="translate(860 265)"/>
<use href="#b" transform="translate(660 317)rotate(10)"/><use href="#b" transform="translate(830 313)"/><use href="#b" transform="translate(863 312)rotate(-10)"/>
<use href="#b" transform="translate(660 368)"/><use href="#b" transform="translate(867 362)"/><use href="#b" transform="translate(900 360)rotate(-15)"/>
<use href="#b" transform="translate(490 419)"/><use href="#b" transform="translate(525 419)"/><use href="#b" transform="translate(559 419)"/><use href="#b" transform="translate(524 470)rotate(-12)"/><use href="#b" transform="translate(558 470)rotate(-5)"/><use href="#b" transform="translate(558 522)rotate(-15)"/><use href="#b" transform="translate(558 573)rotate(-30)"/>
<use href="#b" transform="translate(557 674)rotate(-65)"/><use href="#b" transform="translate(593 675)rotate(-40)"/><use href="#b" transform="translate(629 675)rotate(-35)"/><use href="#b" transform="translate(593 725)rotate(-40)"/><use href="#b" transform="translate(629 725)rotate(-40)"/><use href="#b" transform="translate(666 724)rotate(-40)"/>
<use href="#b" transform="translate(630 776)rotate(-50)"/><use href="#b" transform="translate(666 776)rotate(-45)"/><use href="#b" transform="translate(807 620)rotate(-50)"/><use href="#b" transform="translate(914 614)rotate(-60)"/><use href="#b" transform="translate(873 518)rotate(-30)"/><use href="#b" transform="translate(908 518)rotate(-30)"/>
</g>
<!-- red -->
<g stroke="#d40000" stroke-width="2" fill="none">
<use href="#b" transform="translate(397 110)rotate(5)"/><use href="#b" transform="translate(430 112)rotate(5)"/><use href="#b" transform="translate(396 162)"/><use href="#b" transform="translate(429 163)rotate(2)"/><use href="#b" transform="translate(462 163)"/><use href="#b" transform="translate(428 213)"/><use href="#b" transform="translate(461 215)"/><use href="#b" transform="translate(459 266)rotate(-5)"/>
<use href="#b" transform="translate(690 11)"/><use href="#b" transform="translate(911 11)rotate(-10)"/><use href="#b" transform="translate(943 11)rotate(-10)"/><use href="#b" transform="translate(973 11)rotate(-10)"/><use href="#b" transform="translate(915 62)rotate(-10)"/><use href="#b" transform="translate(947 62)rotate(-10)"/>
<use href="#b" transform="translate(950 113)rotate(-5)"/><use href="#b" transform="translate(526 165)"/><use href="#b" transform="translate(788 165)"/><use href="#b" transform="translate(953 165)"/>
<use href="#b" transform="translate(494 215)"/><use href="#b" transform="translate(526 215)"/><use href="#b" transform="translate(560 215)"/><use href="#b" transform="translate(792 215)"/><use href="#b" transform="translate(825 215)"/>
<use href="#b" transform="translate(493 267)"/><use href="#b" transform="translate(526 267)"/><use href="#b" transform="translate(560 267)"/><use href="#b" transform="translate(793 267)"/><use href="#b" transform="translate(827 267)"/>
<use href="#b" transform="translate(491 317)"/><use href="#b" transform="translate(525 317)rotate(-10)"/><use href="#b" transform="translate(560 317)rotate(-5)"/>
<use href="#b" transform="translate(492 368)"/><use href="#b" transform="translate(525 368)"/><use href="#b" transform="translate(560 368)"/><use href="#b" transform="translate(593 368)"/><use href="#b" transform="translate(627 368)"/>
<use href="#b" transform="translate(593 420)"/><use href="#b" transform="translate(627 420)"/><use href="#b" transform="translate(593 470)"/><use href="#b" transform="translate(593 522)rotate(-8)"/><use href="#b" transform="translate(593 573)rotate(-15)"/>
<use href="#b" transform="translate(629 573)rotate(-15)"/><use href="#b" transform="translate(664 572)rotate(-20)"/><use href="#b" transform="translate(699 572)rotate(-35)"/><use href="#b" transform="translate(805 568)rotate(-30)"/><use href="#b" transform="translate(876 565)rotate(-35)"/>
<use href="#b" transform="translate(628 623)rotate(-25)"/><use href="#b" transform="translate(772 620)rotate(-55)"/><use href="#b" transform="translate(842 617)rotate(-50)"/><use href="#b" transform="translate(878 617)rotate(-50)"/>
<use href="#b" transform="translate(664 675)rotate(-35)"/><use href="#b" transform="translate(700 674)rotate(-35)"/><use href="#b" transform="translate(702 724)rotate(-35)"/>
<use href="#b" transform="translate(739 775)rotate(-55)"/><use href="#b" transform="translate(778 825)rotate(-70)"/><use href="#b" transform="translate(888 820)rotate(-55)"/><use href="#b" transform="translate(925 818)rotate(-50)"/><use href="#b" transform="translate(962 816)rotate(-55)"/>
<use href="#d" transform="translate(628 470)rotate(-5)"/><use href="#d" transform="translate(663 470)rotate(-5)"/><use href="#d" transform="translate(628 522)rotate(-5)"/><use href="#d" transform="translate(663 522)rotate(-15)"/><use href="#d" transform="translate(663 622)rotate(-35)"/><use href="#d" transform="translate(700 622)rotate(-35)"/><use href="#d" transform="translate(735 622)rotate(-40)"/>
<use href="#d" transform="translate(872 465)rotate(-25)"/><use href="#d" transform="translate(907 462)rotate(-25)"/><use href="#d" transform="translate(943 462)rotate(-35)"/><use href="#d" transform="translate(940 512)rotate(-35)"/><use href="#d" transform="translate(840 568)rotate(-35)"/>
<use href="#d" transform="translate(737 675)rotate(-45)"/><use href="#d" transform="translate(772 672)rotate(-65)"/><use href="#d" transform="translate(808 670)rotate(-75)"/><use href="#d" transform="translate(845 668)rotate(-70)"/><use href="#d" transform="translate(881 667)rotate(-75)"/><use href="#d" transform="translate(917 665)rotate(-70)"/><use href="#d" transform="translate(953 663)rotate(-70)"/>
<use href="#d" transform="translate(738 723)rotate(-45)"/><use href="#d" transform="translate(775 723)rotate(-70)"/><use href="#d" transform="translate(810 722)rotate(-80)"/><use href="#d" transform="translate(847 720)rotate(-65)"/><use href="#d" transform="translate(883 718)rotate(-65)"/><use href="#d" transform="translate(920 715)rotate(-60)"/><use href="#d" transform="translate(956 714)rotate(-60)"/>
<use href="#d" transform="translate(776 773)rotate(-70)"/><use href="#d" transform="translate(813 773)rotate(-80)"/><use href="#d" transform="translate(850 771)rotate(-60)"/><use href="#d" transform="translate(887 769)rotate(-60)"/><use href="#d" transform="translate(923 767)rotate(-60)"/><use href="#d" transform="translate(959 765)rotate(-60)"/>
<use href="#d" transform="translate(815 823)rotate(-65)"/><use href="#d" transform="translate(851 822)rotate(-65)"/>
</g>

<!-- title -->
<rect x="9" y="9" width="393" height="58" fill="#000"/>
<g fill="#f2f2f2" font-size="12">
<text x="14" y="24.500" textLength="339" lengthAdjust="spacingAndGlyphs">ECMWF-E RHU (%) [850 hPa] Friday 05-12-2025 12:00 (+48h)</text>
<text x="14" y="42.500" textLength="382" lengthAdjust="spacingAndGlyphs">ECMWF-E Geopotential (m) [850 hPa] Friday 05-12-2025 12:00 (+48h)</text>
<text x="14" y="60.500" textLength="349" lengthAdjust="spacingAndGlyphs">ECMWF-E Wind (m/s) [850 hPa] Friday 05-12-2025 12:00 (+48h)</text>
</g>

<!-- logo -->
<rect x="12" y="844" width="44" height="44" rx="8" fill="#e6e8e8"/>
<g fill="none" stroke-linecap="round">
<path d="M20 873A15 15 0 1 1 49 864" stroke="#44bd9a" stroke-width="5"/>
<path d="M20 873A15.500 15.500 0 0 0 30 879" stroke="#4a9fbf" stroke-width="4"/>
<path d="M49 864A15 15 0 0 1 41 878" stroke="#41aca8" stroke-width="4"/>
<path d="M28 860C33 855 42 859 40 866 38 871 33 871 30 869" stroke="#3f8fb6" stroke-width="2.500"/>
<path d="M17 880C25 887 38 886 47 878" stroke="#4fae9e" stroke-width="1.500"/>
</g>

<!-- legend -->
<rect x="652" y="838.500" width="325" height="60" fill="#fff" fill-opacity=".6" stroke="#000" stroke-width="1"/>
<g stroke="#000" stroke-width="1">
<rect x="724.500" y="845.500" width="22" height="22" fill="#fff"/>
<rect x="746.500" y="845.500" width="22" height="22" fill="#f8ddb0"/>
<rect x="768.500" y="845.500" width="22" height="22" fill="#ff8500"/>
<rect x="790.500" y="845.500" width="22" height="22" fill="#f8fb00"/>
<rect x="812.500" y="845.500" width="22" height="22" fill="#18d0d4"/>
<rect x="834.500" y="845.500" width="22" height="22" fill="#18aab0"/>
<rect x="856.500" y="845.500" width="22" height="22" fill="#0073e0"/>
<rect x="878.500" y="845.500" width="22" height="22" fill="#0055ad"/>
<rect x="900.500" y="845.500" width="22" height="22" fill="#00326e"/>
<rect x="922.500" y="845.500" width="22" height="22" fill="#a9a9a9"/>
<rect x="944.500" y="845.500" width="22" height="22" fill="#5a5a5a"/>
<path d="M746.500 868V873M768.500 868V873M790.500 868V873M812.500 868V873M834.500 868V873M856.500 868V873M878.500 868V873M900.500 868V873M922.500 868V873M944.500 868V873M966.500 868V873" fill="none"/>
</g>
<g fill="#000" font-size="12" text-anchor="middle">
<text x="746" y="886">50</text><text x="768" y="886">55</text><text x="790" y="886">60</text><text x="812" y="886">65</text><text x="834" y="886">70</text><text x="856" y="886">75</text><text x="878" y="886">80</text><text x="900" y="886">85</text><text x="922" y="886">90</text><text x="944" y="886">95</text><text x="966" y="886">100</text>
<text x="688" y="858">ECMWF-E</text><text x="687" y="874">RHU</text><text x="687" y="891">%</text>
</g>
</svg>
</body></html>
